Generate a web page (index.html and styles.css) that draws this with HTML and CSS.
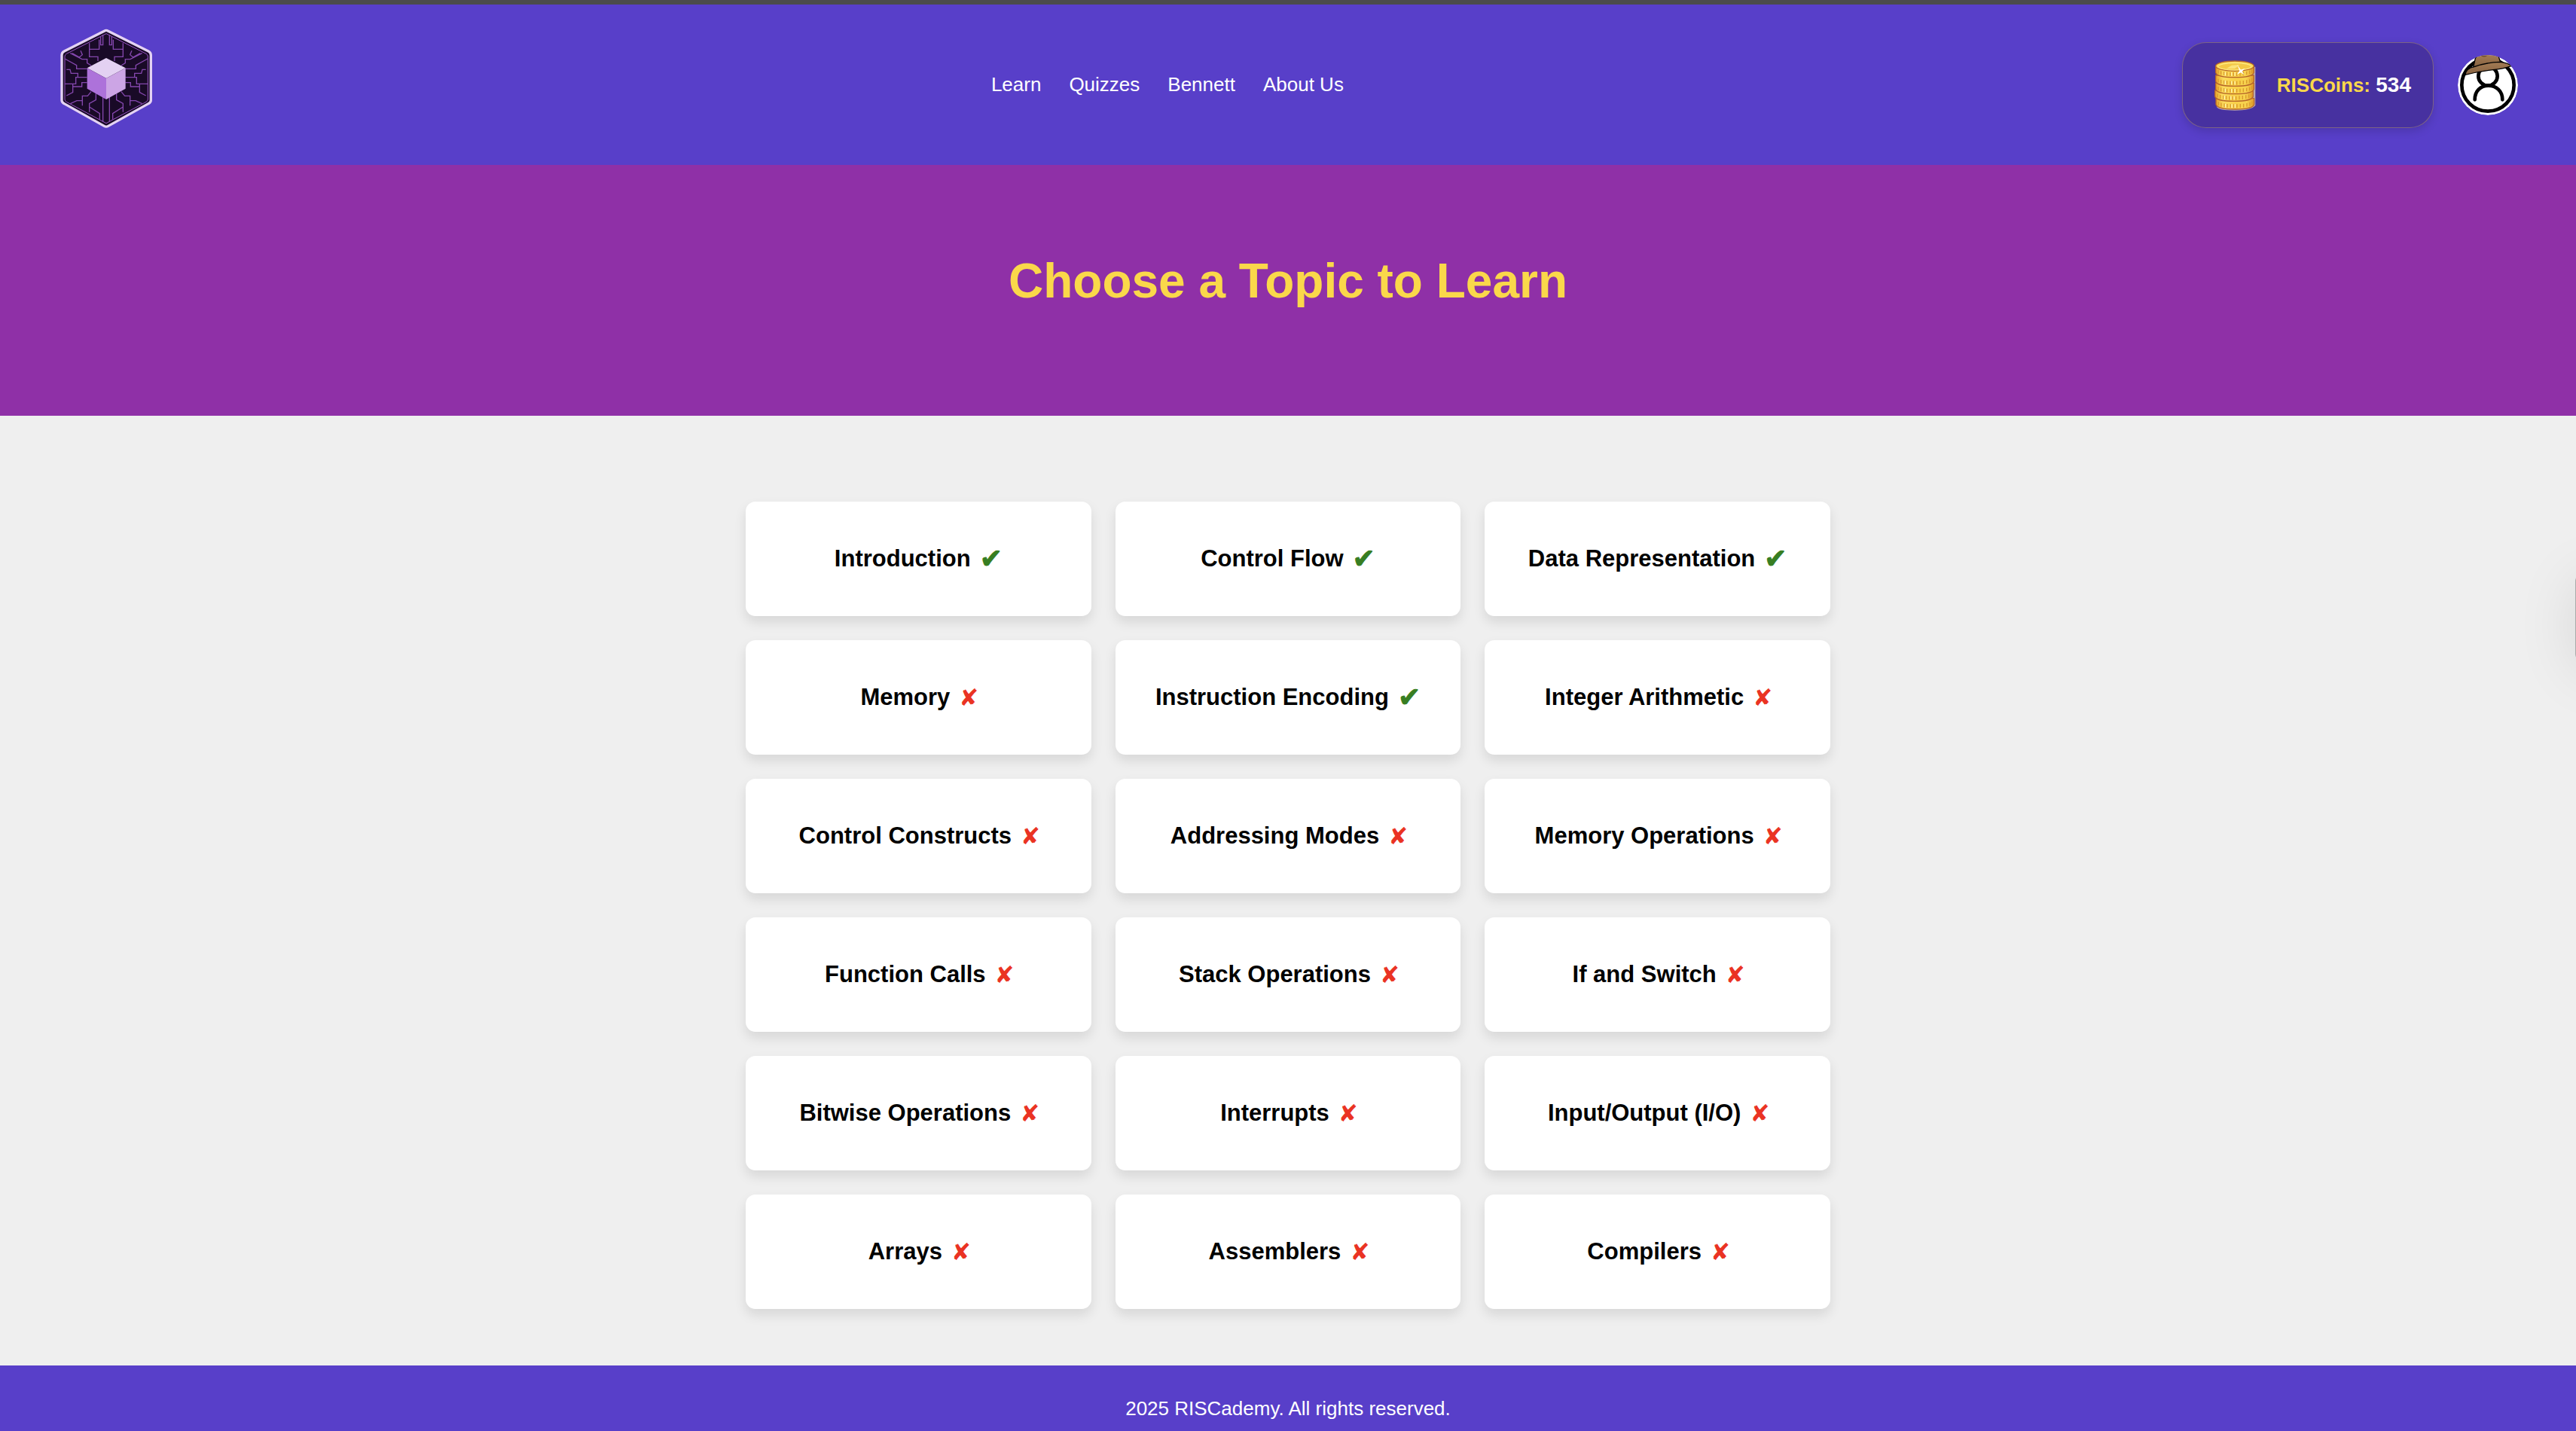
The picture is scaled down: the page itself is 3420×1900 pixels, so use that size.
FILE: index.html
```html
<!DOCTYPE html>
<html lang="en">
<head>
<meta charset="utf-8">
<title>RISCademy - Learn</title>
<link rel="stylesheet" href="styles.css">
</head>
<body>
<header class="site-header">
  <a class="logo" href="#" aria-label="RISCademy home">
    <svg width="124" height="133" viewBox="57 114 372 399" aria-hidden="true">
      <defs>
        <g id="traces">
          <path d="M230 138V179H221V145M215 158V196H176M176 172V226H210V243M100 212L147 236H167V251L183 261M107 212L136 228L148 218L141 202M78 234L125 260V274H167M85 277H99L103 292H130V308M167 308H122V334H78M85 381L110 368V345H146V329H167M110 345V334M100 413L126 401H148V421M148 401V382H169L183 365M202 373V398L176 412V446M176 426L217 452V476M230 385V486"/>
        </g>
      </defs>
      <path d="M235 124Q243 118 251 124L411 204Q421 209 421 220V400Q421 408 411 413L251 502Q243 507 235 502L76 413Q66 408 66 400V220Q66 209 76 204Z" fill="#190a27" stroke="#e4d3f3" stroke-width="10"/>
      <path d="M243 134L402 214Q409 218 409 225V396Q409 402 402 406L243 491L85 406Q78 402 78 396V225Q78 218 85 214Z" fill="none" stroke="#9856c4" stroke-width="3"/>
      <g fill="none" stroke="#8447ad" stroke-width="4">
        <use href="#traces"/>
        <use href="#traces" transform="translate(486) scale(-1 1)"/>
      </g>
      <path d="M243 231L320 271L243 312L167 271Z" fill="#e3d1f2"/>
      <path d="M167 271L243 312V396L167 353Z" fill="#ad72da"/>
      <path d="M320 271L243 312V396L320 353Z" fill="#cca5e5"/>
    </svg>
  </a>
  <nav class="nav">
    <a href="#">Learn</a>
    <a href="#">Quizzes</a>
    <a href="#">Bennett</a>
    <a href="#">About Us</a>
  </nav>
  <div class="account">
    <div class="coins">
      <svg width="58" height="68" viewBox="180 117 174 204" aria-hidden="true">
        <defs>
          <linearGradient id="gold" x1="0" x2="1">
            <stop offset="0" stop-color="#e6a52c"/>
            <stop offset=".2" stop-color="#fbdc5e"/>
            <stop offset=".5" stop-color="#f8cf48"/>
            <stop offset=".8" stop-color="#f7d34f"/>
            <stop offset="1" stop-color="#e09a2a"/>
          </linearGradient>
          <g id="coin">
            <path d="M0 0V24Q4 43 76 43T152 24V0Z" fill="url(#gold)" stroke="#b5652a" stroke-width="4" stroke-linejoin="round"/>
            <path d="M10 14V28M21 18V33M33 20V35M45 22V37M58 23V38M71 23V38M84 23V38M97 22V37M110 21V36M123 19V33M135 16V30M144 12V26" stroke="#d99a2c" stroke-width="4"/>
            <path d="M38 22V36M63 23V37M76 23V37" stroke="#fff3ae" stroke-width="4"/>
          </g>
        </defs>
        <path d="M192 150L346 146V300Q330 320 264 320T192 306Z" fill="#b9a9b0"/>
        <use href="#coin" x="189" y="272"/>
        <use href="#coin" x="185" y="240"/>
        <use href="#coin" x="188" y="211"/>
        <use href="#coin" x="188" y="180"/>
        <use href="#coin" x="188" y="145"/>
        <ellipse cx="264" cy="143" rx="76" ry="20" fill="#fbdc58" stroke="#b5652a" stroke-width="4"/>
        <ellipse cx="264" cy="145" rx="65" ry="14" fill="#f3c846" stroke="#fdeb8c" stroke-width="3"/>
        <path d="M230 154L252 140L284 138L264 153Z" fill="#fbe37a"/>
        <path d="M274 138L288 158L304 153L293 165L302 178L288 169L272 177L283 162Z" fill="#fff"/>
      </svg>
      <span class="coins-text"><span class="coins-label">RISCoins:</span> <span class="coins-value">534</span></span>
    </div>
    <button class="avatar" type="button" aria-label="Profile">
      <svg width="80" height="80" viewBox="1149 99 240 240" aria-hidden="true">
        <defs>
          <clipPath id="disc"><circle cx="1269" cy="219" r="120"/></clipPath>
          <linearGradient id="felt" x1="0" y1="0" x2="0" y2="1">
            <stop offset="0" stop-color="#a47c55"/>
            <stop offset="1" stop-color="#876241"/>
          </linearGradient>
        </defs>
        <g clip-path="url(#disc)">
          <circle cx="1269" cy="219" r="120" fill="#fff"/>
          <g fill="none" stroke="#000" stroke-width="14">
            <circle cx="1269" cy="219" r="104"/>
            <circle cx="1269" cy="183" r="38"/>
            <path d="M1217 277C1217 242 1240 221 1271 221S1327 242 1327 277" stroke-linecap="round"/>
          </g>
          <path d="M1211 148L1219 113Q1224 97 1250 97H1290Q1308 98 1312 106L1319 128Q1270 130 1211 148Z" fill="url(#felt)" stroke="#000" stroke-width="4"/>
          <path d="M1241 101Q1254 112 1267 101" fill="#6e4c2e"/>
          <path d="M1179 178Q1182 152 1215 146Q1260 129 1316 127Q1352 130 1362 143Q1330 155 1290 158Q1230 165 1179 178Z" fill="url(#felt)" stroke="#000" stroke-width="4"/>
        </g>
      </svg>
    </button>
  </div>
</header>

<section class="hero">
  <h1>Choose a Topic to Learn</h1>
</section>

<main class="topics">
  <a class="card" href="#">Introduction <span class="mark done">✔</span></a>
  <a class="card" href="#">Control Flow <span class="mark done">✔</span></a>
  <a class="card" href="#">Data Representation <span class="mark done">✔</span></a>
  <a class="card" href="#">Memory <span class="mark todo">✘</span></a>
  <a class="card" href="#">Instruction Encoding <span class="mark done">✔</span></a>
  <a class="card" href="#">Integer Arithmetic <span class="mark todo">✘</span></a>
  <a class="card" href="#">Control Constructs <span class="mark todo">✘</span></a>
  <a class="card" href="#">Addressing Modes <span class="mark todo">✘</span></a>
  <a class="card" href="#">Memory Operations <span class="mark todo">✘</span></a>
  <a class="card" href="#">Function Calls <span class="mark todo">✘</span></a>
  <a class="card" href="#">Stack Operations <span class="mark todo">✘</span></a>
  <a class="card" href="#">If and Switch <span class="mark todo">✘</span></a>
  <a class="card" href="#">Bitwise Operations <span class="mark todo">✘</span></a>
  <a class="card" href="#">Interrupts <span class="mark todo">✘</span></a>
  <a class="card" href="#">Input/Output (I/O) <span class="mark todo">✘</span></a>
  <a class="card" href="#">Arrays <span class="mark todo">✘</span></a>
  <a class="card" href="#">Assemblers <span class="mark todo">✘</span></a>
  <a class="card" href="#">Compilers <span class="mark todo">✘</span></a>
</main>

<footer class="site-footer">
  <p>2025 RISCademy. All rights reserved.</p>
</footer>

<div class="side-tab" aria-hidden="true"></div>
</body>
</html>
```
FILE: styles.css
```css
* {
  box-sizing: border-box;
}

body {
  margin: 0;
  min-height: 100vh;
  display: flex;
  flex-direction: column;
  background: #efefef;
  color: #000;
  font-family: Arial, "Liberation Sans", sans-serif;
  font-size: 26px;
  line-height: 30px;
}

a {
  color: inherit;
  text-decoration: none;
}

svg {
  display: block;
}

/* Header */
.site-header {
  display: flex;
  align-items: center;
  justify-content: space-between;
  padding: 32px 77px 32px 79px;
  border-top: 6px solid #4b4b4b;
  background: #583fc9;
  color: #fff;
}

.logo {
  padding-bottom: 16px;
}

.nav {
  display: flex;
  gap: 37px;
  padding-bottom: 2px;
}

.account {
  display: flex;
  align-items: center;
  gap: 32px;
}

.coins {
  display: flex;
  align-items: center;
  gap: 26px;
  padding: 22px 29px 22px 41px;
  border: 1px solid rgba(250, 216, 74, 0.3);
  border-radius: 32px;
  background: #4731a0;
  box-shadow: 0 4px 12px rgba(0, 0, 0, 0.15);
  font-weight: bold;
}

.coins-label {
  color: #fad84a;
}

.coins-value {
  font-size: 28px;
}

.avatar {
  padding: 0;
  border: 0;
  border-radius: 50%;
  background: none;
}

/* Title band */
.hero {
  padding: 117px 32px 142px;
  background: #8f30a7;
  color: #fad84a;
  text-align: center;
}

.hero h1 {
  margin: 0;
  font-size: 64px;
  line-height: 74px;
}

/* Topic cards */
.topics {
  flex: 1;
  display: grid;
  grid-template-columns: repeat(3, 1fr);
  align-content: start;
  gap: 32px;
  width: 100%;
  max-width: 1440px;
  margin: 0 auto;
  padding: 114px 0 75px;
}

.card {
  display: flex;
  align-items: center;
  justify-content: center;
  gap: 12px;
  padding: 58px 24px;
  border-radius: 13px;
  background: #fff;
  box-shadow: 0 8px 16px rgba(0, 0, 0, 0.1);
  font-size: 31px;
  font-weight: bold;
  line-height: 36px;
}

.mark {
  font-family: "DejaVu Sans", sans-serif;
}

.done {
  color: #377e22;
  font-size: 36px;
  -webkit-text-stroke: 1px #377e22;
}

.todo {
  width: 23px;
  color: #ea3323;
}

/* Footer */
.site-footer {
  padding: 42px 32px 15px;
  background: #583fc9;
  color: #fff;
  text-align: center;
}

.site-footer p {
  margin: 0;
}

/* Drawer tab parked just past the right edge of the window */
.side-tab {
  position: fixed;
  top: 760px;
  right: -119px;
  width: 120px;
  height: 120px;
  border-radius: 12px;
  background: #aaa;
  box-shadow: 0 10px 80px rgba(0, 0, 0, 0.1);
}
```
